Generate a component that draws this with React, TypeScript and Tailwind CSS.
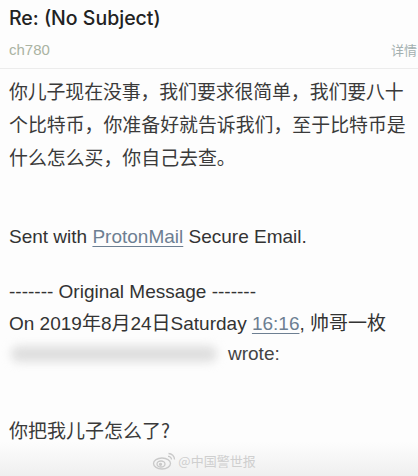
import React from "react";

const cjk = { fontFamily: '"Liberation Sans", "Noto Sans CJK SC", sans-serif' };
const zh = { fontFamily: '"Noto Sans CJK SC", sans-serif' };

function WeiboLogo() {
  return (
    <svg width="24" height="18" viewBox="0 0 24 18" fill="none" stroke="#c9c9c9" strokeWidth="1.3">
      <ellipse cx="10" cy="11.5" rx="8.5" ry="5.5" />
      <ellipse cx="9" cy="12" rx="4" ry="3" />
      <circle cx="8.5" cy="12.3" r="1" fill="#c9c9c9" />
      <path d="M16 4.5a3 3 0 0 1 3.5 3" />
      <path d="M16.5 1.5a6 6 0 0 1 6 6" />
    </svg>
  );
}

export default function App() {
  return (
    <div className="w-[418px] h-[476px] overflow-hidden bg-[#fdfdfd] relative text-[#333]" style={cjk}>
      <div className="px-[9px] pt-[6px]">
        <div
          className="text-[19.5px] leading-[24px] font-medium text-[#222]"
          style={{ fontFamily: 'Inter, "Liberation Sans", sans-serif' }}
        >
          Re: (No Subject)
        </div>
        <div className="flex items-center justify-between mt-[11px] h-[18px]">
          <span className="text-[15px] text-[#aab3a2]">ch780</span>
          <span className="text-[13px] text-[#a3b0b0] mr-[-9px] pr-[1px]" style={zh}>
            详情
          </span>
        </div>
      </div>
      <div className="mt-[9px] h-px bg-[#ececec]" />
      <div className="px-[9px] pt-[5px]">
        <p className="text-[18.9px] leading-[33px] whitespace-nowrap text-[#3a3a3a]" style={zh}>
          <span className="tracking-[-0.1px]">你儿子现在没事，我们要求很简单，我们要八十</span>
          <br />
          <span>个比特币，你准备好就告诉我们，至于比特币是</span>
          <br />
          <span>什么怎么买，你自己去查。</span>
        </p>
        <p className="mt-[47px] text-[19px] leading-[33px] whitespace-nowrap">
          Sent with{" "}
          <span className="text-[#6d7f92] underline decoration-[1px] underline-offset-[3px]">ProtonMail</span>{" "}
          Secure Email.
        </p>
        <p className="mt-[23px] text-[19px] leading-[32px] whitespace-nowrap">------- Original Message -------</p>
        <p className="text-[19px] leading-[32px] whitespace-nowrap">
          On 2019年8月24日Saturday{" "}
          <span className="text-[#6d7f92] underline decoration-[1px] underline-offset-[3px]">16:16</span>, 帅哥一枚
        </p>
        <div className="flex items-center h-[26px] mt-[1px]">
          <div className="w-[206px] h-[16px] ml-[2px] rounded-full bg-[#dedede] blur-[5px]" />
          <span className="ml-[11px] text-[19px] leading-[26px] text-[#444]">wrote:</span>
        </div>
        <p className="mt-[48px] text-[19px] leading-[30px] text-[#3a3a3a]" style={zh}>
          你把我儿子怎么了?
        </p>
      </div>
      <div className="absolute left-0 right-0 bottom-0 h-[34px] bg-gradient-to-b from-[#fbfbfb]/0 to-[#efefef] flex items-start justify-center pt-[9px]">
        <div className="flex items-center gap-[2px] ml-[-10px]">
          <WeiboLogo />
          <span className="text-[13px] text-[#cfcfcf]" style={zh}>
            @中国警世报
          </span>
        </div>
      </div>
    </div>
  );
}
